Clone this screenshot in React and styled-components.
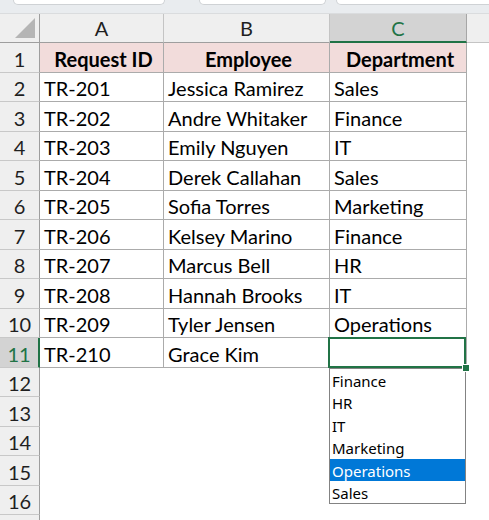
import React from "react";
import styled, { createGlobalStyle } from "styled-components";

const GlobalStyle = createGlobalStyle`
  html, body {
    margin: 0;
    padding: 0;
    background: #ffffff;
    overflow: hidden;
  }
  body {
    font-family: Lato, "Liberation Sans", sans-serif;
  }
`;

const COLS = "40px 124px 166px 137px 1fr";
const GREEN = "#217346";
const LINE = "#ababab";

const Page = styled.div`
  width: 489px;
  height: 520px;
  overflow: hidden;
  background: #ffffff;
`;

const Toolbar = styled.div`
  height: 14px;
  background: #e9ecef;
  display: flex;
  align-items: flex-start;
  padding-left: 13px;
  box-sizing: border-box;
  border-bottom: 1px solid #dadcde;
`;

const ToolbarBox = styled.div`
  width: ${(p) => p.$w}px;
  margin-right: ${(p) => p.$gap}px;
  height: 4px;
  background: #ffffff;
  border: 1px solid #cfd2d5;
  border-top: none;
  border-radius: 0 0 6px 6px;
  flex-shrink: 0;
`;

const Row = styled.div`
  display: grid;
  grid-template-columns: ${COLS};
  height: ${(p) => p.$h}px;
`;

const Corner = styled.div`
  background: #efefef;
  border-right: 1px solid #9e9e9e;
  border-bottom: 1px solid #9e9e9e;
  display: flex;
  align-items: flex-end;
  justify-content: flex-end;
  padding: 0 4px 4px 0;
`;

const ColHead = styled.div`
  background: ${(p) => (p.$selected ? "#d3d3d3" : "#efefef")};
  color: ${(p) => (p.$selected ? GREEN : "#1f1f1f")};
  border-right: 1px solid ${(p) => (p.$last ? "#a6a6a6" : "#c4c4c4")};
  border-bottom: ${(p) => (p.$selected ? `2px solid ${GREEN}` : "1px solid #9e9e9e")};
  display: flex;
  align-items: center;
  justify-content: center;
  font-size: 20px;
  padding-top: ${(p) => (p.$selected ? 1 : 0)}px;
`;

const ColFiller = styled.div`
  background: #efefef;
  border-bottom: 1px solid #c4c4c4;
`;

const RowHead = styled.div`
  background: ${(p) => (p.$selected ? "#d3d3d3" : "#efefef")};
  color: ${(p) => (p.$selected ? GREEN : "#1f1f1f")};
  border-right: ${(p) => (p.$selected ? `2px solid ${GREEN}` : "1px solid #9e9e9e")};
  border-bottom: 1px solid #c8c8c8;
  display: flex;
  align-items: center;
  justify-content: center;
  font-size: 20px;
  padding-top: 2px;
`;

const Cell = styled.div`
  position: relative;
  background: ${(p) => (p.$heading ? "#f2dcdb" : "#ffffff")};
  border-right: ${(p) => (p.$grid ? `1px solid ${LINE}` : "1px solid transparent")};
  border-bottom: ${(p) => (p.$grid ? `1px solid ${LINE}` : "1px solid transparent")};
  display: flex;
  align-items: center;
  justify-content: ${(p) => (p.$heading ? "center" : "flex-start")};
  padding: 2px 0 0 4px;
  font-size: 20px;
  font-weight: ${(p) => (p.$heading ? 700 : 400)};
  color: #000000;
  white-space: nowrap;
`;

const Filler = styled.div`
  background: #ffffff;
`;

const Selection = styled.div`
  position: absolute;
  left: -2px;
  top: -1px;
  right: 0;
  bottom: -1px;
  border: 2px solid ${GREEN};
  pointer-events: none;
  z-index: 2;
`;

const FillHandle = styled.div`
  position: absolute;
  right: -4px;
  bottom: -5px;
  width: 6px;
  height: 6px;
  background: ${GREEN};
  border: 1px solid #ffffff;
  z-index: 4;
`;

const ListBox = styled.ul`
  position: absolute;
  left: -1px;
  top: calc(100% + 1px);
  width: 137px;
  margin: 0;
  padding: 0;
  list-style: none;
  background: #ffffff;
  border: 1px solid #838383;
  box-sizing: border-box;
  z-index: 3;
  font-family: "Noto Sans", "Open Sans", sans-serif;
  font-size: 15px;
`;

const ListItem = styled.li`
  height: 22.4px;
  line-height: 24px;
  padding-left: 2px;
  background: ${(p) => (p.$active ? "#0078d7" : "transparent")};
  color: ${(p) => (p.$active ? "#ffffff" : "#000000")};
`;

const CornerMark = () => (
  <svg width="20" height="20" viewBox="0 0 20 20">
    <polygon points="20,0 20,20 0,20" fill="#b5b5b5" />
  </svg>
);

const rows = [
  ["Request ID", "Employee", "Department"],
  ["TR-201", "Jessica Ramirez", "Sales"],
  ["TR-202", "Andre Whitaker", "Finance"],
  ["TR-203", "Emily Nguyen", "IT"],
  ["TR-204", "Derek Callahan", "Sales"],
  ["TR-205", "Sofia Torres", "Marketing"],
  ["TR-206", "Kelsey Marino", "Finance"],
  ["TR-207", "Marcus Bell", "HR"],
  ["TR-208", "Hannah Brooks", "IT"],
  ["TR-209", "Tyler Jensen", "Operations"],
  ["TR-210", "Grace Kim", ""],
];

const departments = ["Finance", "HR", "IT", "Marketing", "Operations", "Sales"];
const LABELLED_ROWS = 16;
const TOTAL_ROWS = 17;
const ACTIVE_ROW = 11;

export default function App() {
  const bodyRows = Array.from({ length: TOTAL_ROWS }, (_, i) => i + 1);
  return (
    <Page>
      <GlobalStyle />
      <Toolbar>
        <ToolbarBox $w={150} $gap={34} />
        <ToolbarBox $w={125} $gap={10} />
        <ToolbarBox $w={170} $gap={0} />
      </Toolbar>
      <Row $h={29}>
        <Corner>
          <CornerMark />
        </Corner>
        <ColHead>A</ColHead>
        <ColHead>B</ColHead>
        <ColHead $selected $last>
          C
        </ColHead>
        <ColFiller />
      </Row>
      {bodyRows.map((n) => {
        const data = rows[n - 1];
        const h = n % 2 === 1 ? 30 : 29;
        const active = n === ACTIVE_ROW;
        return (
          <Row key={n} $h={h}>
            <RowHead $selected={active}>{n <= LABELLED_ROWS ? n : ""}</RowHead>
            {[0, 1, 2].map((c) => (
              <Cell key={c} $grid={!!data} $heading={n === 1}>
                {data ? data[c] : ""}
                {active && c === 2 && (
                  <>
                    <Selection />
                    <FillHandle />
                    <ListBox>
                      {departments.map((d) => (
                        <ListItem key={d} $active={d === "Operations"}>
                          {d}
                        </ListItem>
                      ))}
                    </ListBox>
                  </>
                )}
              </Cell>
            ))}
            <Filler />
          </Row>
        );
      })}
    </Page>
  );
}
